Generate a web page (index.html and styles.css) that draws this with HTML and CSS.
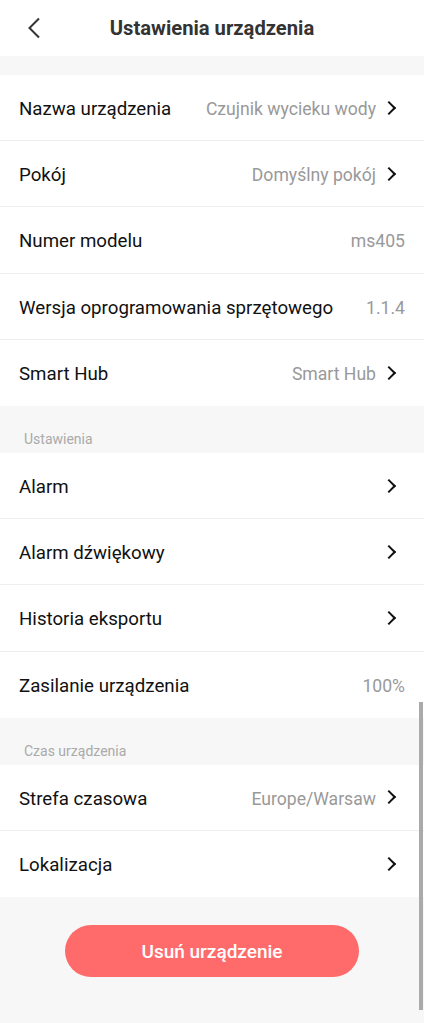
FILE: index.html
```html
<!DOCTYPE html>
<html lang="pl">
<head>
    <meta charset="UTF-8">
    <meta name="viewport" content="width=device-width, initial-scale=1.0">
    <title>Ustawienia urządzenia</title>
    <link rel="stylesheet" href="styles.css">
</head>
<body>

    <header class="topbar">
        <button class="back" aria-label="Wstecz">
            <svg width="14" height="22" viewBox="0 0 14 22"><path d="M12 1.5 L2.5 11 L12 20.5" fill="none" stroke="#333" stroke-width="2"/></svg>
        </button>
        <h1>Ustawienia urządzenia</h1>
    </header>

    <div class="gap"></div>

    <section class="group">
        <div class="row">
            <span class="label">Nazwa urządzenia</span>
            <span class="value">Czujnik wycieku wody</span>
            <span class="arrow"></span>
        </div>
        <div class="row">
            <span class="label">Pokój</span>
            <span class="value">Domyślny pokój</span>
            <span class="arrow"></span>
        </div>
        <div class="row">
            <span class="label">Numer modelu</span>
            <span class="value">ms405</span>
        </div>
        <div class="row">
            <span class="label">Wersja oprogramowania sprzętowego</span>
            <span class="value">1.1.4</span>
        </div>
        <div class="row">
            <span class="label">Smart Hub</span>
            <span class="value">Smart Hub</span>
            <span class="arrow"></span>
        </div>
    </section>

    <div class="section-title">Ustawienia</div>

    <section class="group">
        <div class="row">
            <span class="label">Alarm</span>
            <span class="arrow"></span>
        </div>
        <div class="row">
            <span class="label">Alarm dźwiękowy</span>
            <span class="arrow"></span>
        </div>
        <div class="row">
            <span class="label">Historia eksportu</span>
            <span class="arrow"></span>
        </div>
        <div class="row">
            <span class="label">Zasilanie urządzenia</span>
            <span class="value">100%</span>
        </div>
    </section>

    <div class="section-title">Czas urządzenia</div>

    <section class="group">
        <div class="row">
            <span class="label">Strefa czasowa</span>
            <span class="value">Europe/Warsaw</span>
            <span class="arrow"></span>
        </div>
        <div class="row">
            <span class="label">Lokalizacja</span>
            <span class="arrow"></span>
        </div>
    </section>

    <div class="footer">
        <button class="delete">Usuń urządzenie</button>
    </div>

    <div class="scrollbar"></div>

</body>
</html>
```

FILE: styles.css
```css
body {
    font-family: Roboto, "Noto Sans", sans-serif;
    background-color: #f7f7f7;
    color: #111;
    margin: 0;
    min-height: 1023px;
}

.topbar {
    height: 56px;
    background-color: #fff;
    display: flex;
    align-items: center;
    justify-content: center;
    position: relative;
}

.topbar h1 {
    margin: 0;
    font-size: 20.2px;
    font-weight: 700;
    color: #333;
}

.back {
    position: absolute;
    left: 27px;
    top: 17px;
    padding: 0;
    border: none;
    background: none;
    display: flex;
}

.gap {
    height: 19px;
}

.group {
    background-color: #fff;
}

.row {
    height: 66.2px;
    display: flex;
    align-items: center;
    padding: 0 19px;
    border-bottom: 1px solid #eeeeee;
    box-sizing: border-box;
}

.row:last-child {
    border-bottom: none;
}

.label {
    font-size: 18.7px;
    color: #111;
    flex: 1;
    padding-top: 3px;
}

.value {
    font-size: 17.6px;
    color: #999;
    padding-top: 3px;
}

.arrow {
    width: 8px;
    height: 8px;
    border-right: 2.6px solid #111;
    border-top: 2.6px solid #111;
    transform: rotate(45deg);
    margin-left: 8px;
    margin-right: 11px;
}

.section-title {
    height: 47px;
    box-sizing: border-box;
    padding: 25px 0 0 24px;
    font-size: 14px;
    color: #aaa;
}

.footer {
    padding: 28px 0 40px;
    display: flex;
    justify-content: center;
}

.delete {
    width: 294px;
    height: 52px;
    border: none;
    border-radius: 26px;
    background-color: #ff6b6b;
    color: #fff;
    font-family: Roboto, sans-serif;
    font-size: 19px;
    font-weight: 500;
}

.scrollbar {
    position: absolute;
    right: 1px;
    top: 702px;
    width: 4px;
    height: 308px;
    background-color: #aaa;
}
```
